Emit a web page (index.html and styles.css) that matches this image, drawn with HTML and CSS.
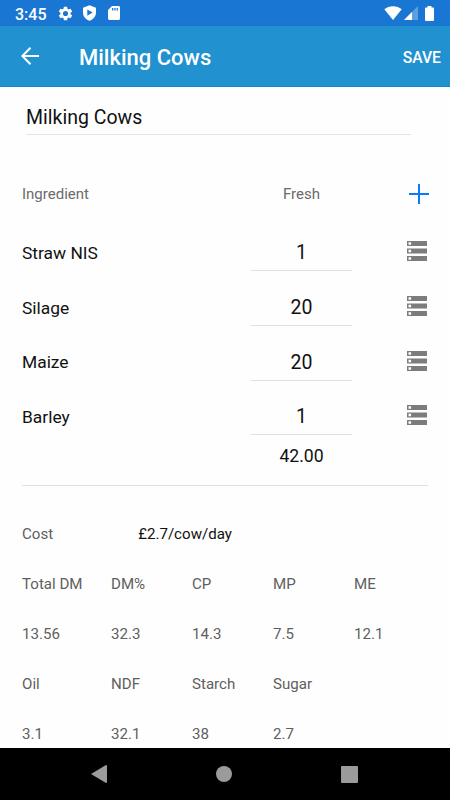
FILE: index.html
```
<!DOCTYPE html>
<html lang="en">
  <head>
    <meta charset="UTF-8" />
    <meta name="viewport" content="width=device-width, initial-scale=1.0" />
    <title>Milking Cows</title>
    <link rel="stylesheet" href="styles.css">
  </head>
  <body>
    <div class="status">
      <span class="time">3:45</span>
      <svg class="gear" width="17" height="17" viewBox="0 0 24 24"><path d="M19.14 12.94c.04-.3.06-.61.06-.94s-.02-.64-.07-.94l2.03-1.58a.49.49 0 0 0 .12-.61l-1.92-3.32a.49.49 0 0 0-.59-.22l-2.39.96a7 7 0 0 0-1.62-.94l-.36-2.54a.48.48 0 0 0-.48-.41h-3.84a.47.47 0 0 0-.47.41l-.36 2.54c-.59.24-1.13.57-1.62.94l-2.39-.96a.48.48 0 0 0-.59.22L2.74 8.87a.47.47 0 0 0 .12.61l2.03 1.58a6 6 0 0 0 0 1.88l-2.03 1.58a.49.49 0 0 0-.12.61l1.92 3.32c.12.22.37.29.59.22l2.39-.96c.5.38 1.03.7 1.62.94l.36 2.54c.05.24.24.41.48.41h3.84c.24 0 .44-.17.47-.41l.36-2.54a7 7 0 0 0 1.62-.94l2.39.96c.22.08.47 0 .59-.22l1.92-3.32a.47.47 0 0 0-.12-.61zM12 15.6a3.6 3.6 0 1 1 0-7.2 3.6 3.6 0 0 1 0 7.2z"/></svg>
      <svg class="shield" width="13" height="16" viewBox="0 0 13 16"><path fill-rule="evenodd" d="M6.5.3 13 2.8v4.7c0 3.7-2.6 6.9-6.5 8.2C2.6 14.4 0 11.2 0 7.5V2.8zM4.3 4.5v6.2L9.7 7.6z"/></svg>
      <svg class="card" width="12" height="14" viewBox="0 0 12 14"><path fill-rule="evenodd" d="M4 0h7l1 1v12l-1 1H1l-1-1V4zM4 2v2.5h1.3V2zM6.300 2v2.5h1.300V2zM8.600 2v2.5h1.300V2z"/></svg>
      <svg class="wifi" width="18" height="14" viewBox="0 0 18 14"><path d="M9 14 .3 3.2C2.8 1.2 5.7.2 9 .2s6.2 1 8.700 3z"/></svg>
      <svg class="signal" width="14" height="14" viewBox="0 0 14 14"><path opacity=".3" d="M0 14 14 0v14z"/><path d="M0 14 8 6v8z"/></svg>
      <svg class="battery" width="9" height="15" viewBox="0 0 9 15"><path d="M2.5 1.5V0h4v1.5H8a1 1 0 0 1 1 1V14a1 1 0 0 1-1 1H1a1 1 0 0 1-1-1V2.5a1 1 0 0 1 1-1z"/></svg>
    </div>
    <header class="toolbar">
      <svg class="back" width="18" height="18" viewBox="0 0 18 18"><path d="M18 9H1.5M9.5.8 1.3 9l8.2 8.200" fill="none" stroke="#fff" stroke-width="2"/></svg>
      <h1>Milking Cows</h1>
      <span class="save">SAVE</span>
    </header>
    <main>
      <div class="name">Milking Cows</div>

      <div class="row head">
        <span>Ingredient</span>
        <span class="fresh">Fresh</span>
        <svg class="plus" width="20" height="20" viewBox="0 0 20 20"><path d="M10 0v20M0 10h20" stroke="#0a7aff" stroke-width="2"/></svg>
      </div>
      <div class="row">
        <span class="label">Straw NIS</span>
        <span class="amount">1</span>
        <svg class="storage" width="20" height="20" viewBox="0 0 20 20"><path fill-rule="evenodd" d="M0 0h20v5H0zM0 7.5h20v5H0zM0 15h20v5H0zM1.5 1.2v2.6h2.6V1.2zM1.5 8.7v2.6h2.6V8.7zM1.5 16.2v2.6h2.6v-2.6z"/></svg>
      </div>
      <div class="row">
        <span class="label">Silage</span>
        <span class="amount">20</span>
        <svg class="storage" width="20" height="20" viewBox="0 0 20 20"><path fill-rule="evenodd" d="M0 0h20v5H0zM0 7.5h20v5H0zM0 15h20v5H0zM1.5 1.2v2.6h2.6V1.2zM1.5 8.7v2.6h2.6V8.7zM1.5 16.2v2.6h2.6v-2.6z"/></svg>
      </div>
      <div class="row">
        <span class="label">Maize</span>
        <span class="amount">20</span>
        <svg class="storage" width="20" height="20" viewBox="0 0 20 20"><path fill-rule="evenodd" d="M0 0h20v5H0zM0 7.5h20v5H0zM0 15h20v5H0zM1.5 1.2v2.6h2.6V1.2zM1.5 8.7v2.6h2.6V8.7zM1.5 16.2v2.6h2.6v-2.6z"/></svg>
      </div>
      <div class="row">
        <span class="label">Barley</span>
        <span class="amount">1</span>
        <svg class="storage" width="20" height="20" viewBox="0 0 20 20"><path fill-rule="evenodd" d="M0 0h20v5H0zM0 7.5h20v5H0zM0 15h20v5H0zM1.5 1.2v2.6h2.6V1.2zM1.5 8.7v2.6h2.6V8.7zM1.5 16.2v2.6h2.6v-2.6z"/></svg>
      </div>
      <div class="total">42.00</div>

      <div class="cost">
        <span>Cost</span>
        <span class="price">£2.7/cow/day</span>
      </div>
      <div class="nutrients">
        <span>Total DM</span>
        <span>DM%</span>
        <span>CP</span>
        <span>MP</span>
        <span>ME</span>

        <span>13.56</span>
        <span>32.3</span>
        <span>14.3</span>
        <span>7.5</span>
        <span>12.1</span>

        <span>Oil</span>
        <span>NDF</span>
        <span>Starch</span>
        <span>Sugar</span>
        <span></span>

        <span>3.1</span>
        <span>32.1</span>
        <span>38</span>
        <span>2.7</span>
      </div>
    </main>
    <nav class="navbar">
      <svg width="16" height="18" viewBox="0 0 16 18"><path d="M15 0a1 1 0 0 1 1 1v16a1 1 0 0 1-1 1L0 9z"/></svg>
      <svg width="16" height="16" viewBox="0 0 16 16"><circle cx="8" cy="8" r="8"/></svg>
      <svg width="17" height="17" viewBox="0 0 17 17"><rect width="17" height="17" rx="1"/></svg>
    </nav>
  </body>
</html>
```
FILE: styles.css
```
* {
  box-sizing: border-box;
}

body {
  margin: 0;
  height: 800px;
  display: flex;
  flex-direction: column;
  overflow: hidden;
  background: #fefefe;
  font-family: Roboto, sans-serif;
  color: #111;
}

svg {
  display: block;
  flex: none;
}

.status {
  height: 26px;
  display: flex;
  align-items: center;
  padding: 0 16px 0 15px;
  background: #1976d2;
  color: #fff;
  fill: #fff;
}

.time {
  width: 42px;
  font-size: 16px;
  font-weight: 500;
  padding-top: 2px;
}

.shield {
  margin-left: 9px;
}

.card {
  margin-left: 12px;
}

.wifi {
  margin-left: auto;
}

.signal {
  margin-left: 2px;
}

.battery {
  margin-left: 7px;
}

.toolbar {
  height: 61px;
  display: flex;
  align-items: center;
  padding: 0 9px 0 21px;
  background: #2191d0;
  border-bottom: 1px solid #0b88d0;
  color: #fff;
}

h1 {
  margin: 0 auto 0 40px;
  padding-top: 3px;
  font-size: 22px;
  font-weight: 500;
}

.save {
  padding-top: 2px;
  font-size: 15.7px;
  font-weight: 500;
}

main {
  flex: 1;
  min-height: 0;
  overflow: hidden;
  padding: 0 22px;
}

.name {
  height: 48px;
  margin: 0 17px 0 4px;
  padding-top: 11px;
  border-bottom: 1px solid #e4e4e6;
  font-size: 19.5px;
  line-height: 39px;
}

.row {
  display: grid;
  grid-template-columns: 229px 101px 1fr;
  align-items: center;
  height: 54.7px;
  font-size: 17.4px;
  line-height: 22px;
}

.label {
  padding-top: 3px;
}

.head {
  height: 40px;
  margin: 39px 0 10px;
  font-size: 15px;
  color: #6b6b6b;
}

.fresh {
  text-align: center;
}

.amount {
  height: 40px;
  line-height: 43px;
  border-bottom: 1px solid #e0e0e3;
  font-size: 19.5px;
  text-align: center;
}

.plus {
  justify-self: end;
  margin-right: -1px;
}

.storage {
  justify-self: end;
  margin-right: 1px;
  fill: #7d7b7b;
}

.total {
  height: 43px;
  padding: 1px 76px 0 229px;
  border-bottom: 1px solid #e0e0e3;
  font-size: 17.6px;
  line-height: 24px;
  text-align: center;
}

.cost {
  display: flex;
  margin-top: 23px;
  line-height: 50px;
  font-size: 15.1px;
  color: #5f5f5f;
}

.price {
  margin-left: 85px;
  color: #111;
}

.nutrients {
  display: grid;
  grid-template-columns: 89px 81px 81px 81px 1fr;
  line-height: 50px;
  font-size: 15.1px;
  color: #5f5f5f;
}

.navbar {
  height: 52px;
  display: flex;
  align-items: center;
  justify-content: space-between;
  padding: 0 92px 0 91px;
  background: #000;
  fill: #9b9b9b;
}
```
